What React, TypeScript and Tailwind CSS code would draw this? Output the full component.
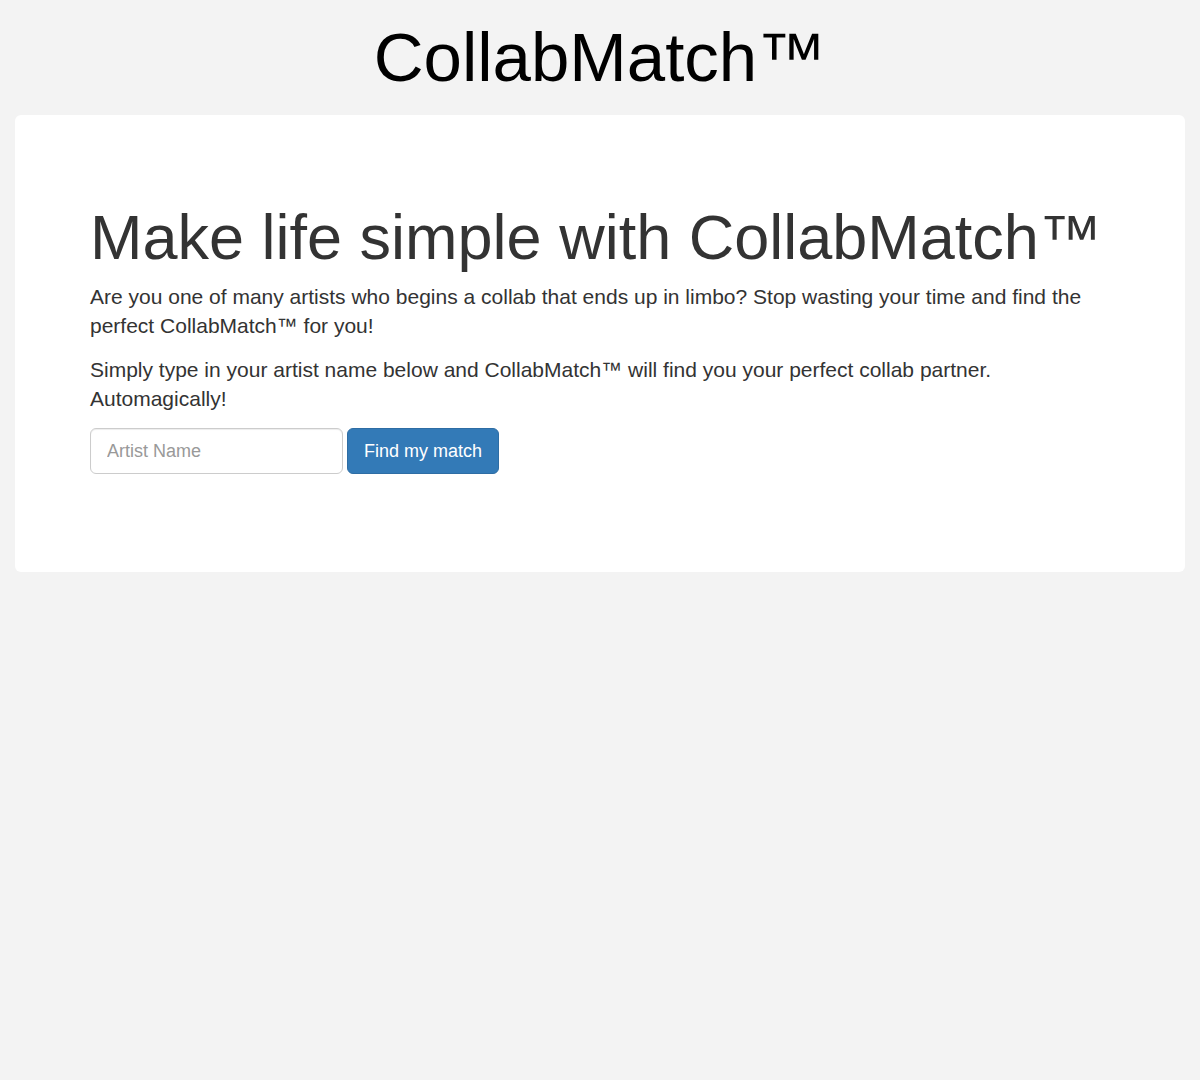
import React from "react";

export default function App() {
  return (
    <div
      className="min-h-[1080px] w-full bg-[#f3f3f3] text-[#333]"
      style={{ fontFamily: '"Liberation Sans", Arial, sans-serif' }}
    >
      <h1 className="pt-[19px] mb-[19px] text-center text-[69px] leading-[77px] text-black font-normal">
        CollabMatch™
      </h1>
      <div className="mx-[15px] rounded-[6px] bg-white pl-[75px] pr-[60px] pt-[88px] pb-[98px]">
        <h2 className="text-[63px] leading-[69px] font-normal mb-[10px] whitespace-nowrap">
          Make life simple with CollabMatch™
        </h2>
        <p className="text-[21px] leading-[29px] mb-[15px]">
          Are you one of many artists who begins a collab that ends up in limbo? Stop wasting your time and find the perfect CollabMatch™ for you!
        </p>
        <p className="text-[21px] leading-[29px] mb-[15px]">
          Simply type in your artist name below and CollabMatch™ will find you your perfect collab partner. Automagically!
        </p>
        <div className="flex items-center gap-[4px]">
          <input
            type="text"
            placeholder="Artist Name"
            className="h-[46px] w-[253px] rounded-[6px] border border-[#ccc] bg-white px-[16px] text-[18px] text-[#555] placeholder:text-[#999] shadow-[inset_0_1px_1px_rgba(0,0,0,0.075)] outline-none"
          />
          <button className="h-[46px] w-[152px] rounded-[6px] border border-[#2e6da4] bg-[#337ab7] text-[18px] text-white">
            Find my match
          </button>
        </div>
      </div>
    </div>
  );
}
